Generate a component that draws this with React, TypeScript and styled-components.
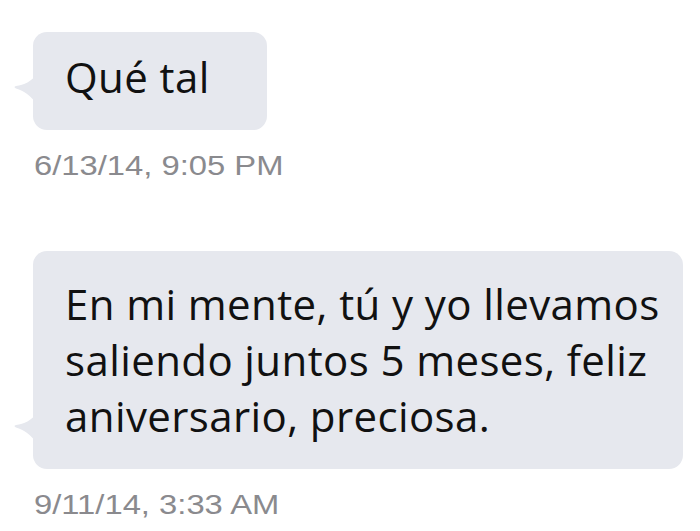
import React from "react";
import styled, { createGlobalStyle } from "styled-components";

const Global = createGlobalStyle`
  html, body { margin: 0; padding: 0; background: #ffffff; }
  body { width: 700px; height: 531px; overflow: hidden; }
`;

const Thread = styled.div`
  display: flex;
  flex-direction: column;
  align-items: flex-start;
  padding: 32px 0 0 33px;
`;

const Bubble = styled.div<{ $top: number; $bottom: number; $right: number; $width?: number }>`
  position: relative;
  box-sizing: border-box;
  width: ${(p) => (p.$width ? `${p.$width}px` : "auto")};
  background: #e6e8ee;
  border-radius: 14px;
  padding: ${(p) => p.$top}px ${(p) => p.$right}px ${(p) => p.$bottom}px 32px;
  font-family: "Open Sans", Lato, sans-serif;
  font-size: 42px;
  letter-spacing: 0.4px;
  line-height: 56px;
  color: #111111;
  white-space: nowrap;
`;

const Tail = styled.svg`
  position: absolute;
  left: -19px;
  bottom: 27px;
  width: 22px;
  height: 28px;
`;

const Stamp = styled.div<{ $gap: number }>`
  margin: 21px 0 ${(p) => p.$gap}px 1px;
  font-family: "Liberation Sans", Arial, sans-serif;
  font-size: 28px;
  line-height: 30px;
  color: #8a8a8e;
  transform: scaleX(1.17);
  transform-origin: left center;
`;

const BubbleTail = () => (
  <Tail viewBox="0 0 22 28">
    <path d="M22 0 C18 6 10 10 2 11 C0 11.5 0 12.5 2 13.5 C10 16 17 21 22 28 Z" fill="#e6e8ee" />
  </Tail>
);

export default function App() {
  return (
    <>
      <Global />
      <Thread>
        <Bubble $top={17} $bottom={25} $right={57}>
          <BubbleTail />
          Qué tal
        </Bubble>
        <Stamp $gap={70}>6/13/14, 9:05 PM</Stamp>
        <Bubble $top={25} $bottom={25} $right={26} $width={650}>
          <BubbleTail />
          En mi mente, tú y yo llevamos
          <br />
          saliendo juntos 5 meses, feliz
          <br />
          aniversario, preciosa.
        </Bubble>
        <Stamp $gap={0}>9/11/14, 3:33 AM</Stamp>
      </Thread>
    </>
  );
}
